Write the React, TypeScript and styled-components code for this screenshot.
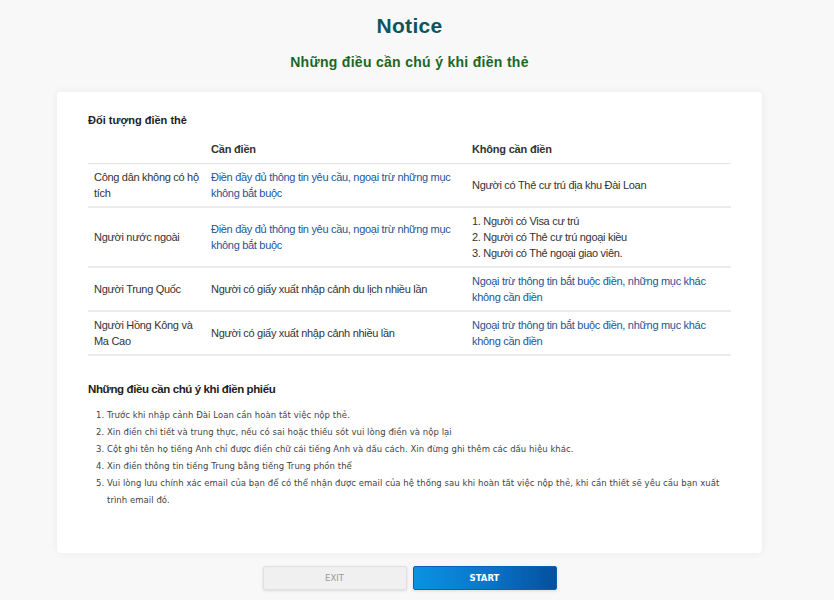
import React from "react";
import styled, { createGlobalStyle } from "styled-components";

const Global = createGlobalStyle`
  html, body { margin: 0; padding: 0; background: #f8f8f8; }
  body { font-family: "Liberation Sans", Arial, sans-serif; }
  * { box-sizing: border-box; }
`;

const Page = styled.div`
  width: 819px;
  display: flex;
  flex-direction: column;
  align-items: center;
  padding-top: 13px;
`;

const Title = styled.h1`
  margin: 0;
  font-size: 21px;
  line-height: 26px;
  font-weight: bold;
  color: #0d5360;
  letter-spacing: 0.3px;
`;

const Subtitle = styled.h2`
  margin: 14px 0 0;
  font-size: 14px;
  line-height: 18px;
  font-weight: bold;
  color: #1c6625;
  letter-spacing: 0.3px;
`;

const Card = styled.div`
  margin-top: 21px;
  width: 705px;
  background: #fff;
  border-radius: 4px;
  box-shadow: 0 0 10px rgba(0, 0, 0, 0.06);
  padding: 20px 30px 44px 31px;
`;

const SectionTitle = styled.div`
  font-size: 11px;
  line-height: 16px;
  font-weight: bold;
  color: #222;
  margin-bottom: 7px;
`;

const Table = styled.table`
  width: 643px;
  border-collapse: collapse;
  table-layout: fixed;
`;

const Th = styled.th<{ $w: number }>`
  width: ${(p) => p.$w}px;
  text-align: left;
  font-size: 11px;
  line-height: 16px;
  font-weight: bold;
  color: #333;
  letter-spacing: -0.2px;
  padding: 6px 2px 6px 6px;
  border-bottom: 1px solid #e3e3e3;
`;

const Row = styled.tr`
  border-bottom: 2px solid #ececec;
`;

const Td = styled.td<{ $blue?: boolean }>`
  font-size: 11px;
  line-height: 16px;
  letter-spacing: -0.3px;
  color: ${(p) => (p.$blue ? "#1d5597" : "#333")};
  padding: 5px 2px 5px 6px;
  vertical-align: middle;
`;

const NotesTitle = styled.div`
  margin-top: 25px;
  font-size: 11.5px;
  line-height: 16px;
  font-weight: bold;
  letter-spacing: -0.4px;
  color: #222;
`;

const NoteList = styled.ol`
  margin: 10px 0 0;
  padding-left: 19px;
  font-family: "DejaVu Sans", Verdana, sans-serif;
  font-size: 8.5px;
  line-height: 17px;
  color: #444;
  letter-spacing: 0.05px;
`;

const Buttons = styled.div`
  margin-top: 13px;
  display: flex;
  gap: 6px;
  padding-bottom: 9px;
`;

const Button = styled.button<{ $primary?: boolean }>`
  width: 144px;
  height: 24px;
  border-radius: 2px;
  font-family: "DejaVu Sans", Verdana, sans-serif;
  font-size: 8.5px;
  cursor: pointer;
  border: 1px solid ${(p) => (p.$primary ? "#0b62b0" : "#e0e0e0")};
  background: ${(p) =>
    p.$primary ? "linear-gradient(90deg, #0a92e0 0%, #0a76cc 50%, #04509e 100%)" : "#f0f0f0"};
  color: ${(p) => (p.$primary ? "#fff" : "#9a9a9a")};
  font-weight: ${(p) => (p.$primary ? "bold" : "normal")};
  box-shadow: 0 1px 3px rgba(0, 0, 0, 0.12);
`;

const rows: { who: string[]; need: string[]; needBlue: boolean; noNeed: string[]; noNeedBlue: boolean }[] = [
  {
    who: ["Công dân không có hộ tích"],
    need: ["Điền đầy đủ thông tin yêu cầu, ngoại trừ những mục không bắt buộc"],
    needBlue: true,
    noNeed: ["Người có Thẻ cư trú địa khu Đài Loan"],
    noNeedBlue: false,
  },
  {
    who: ["Người nước ngoài"],
    need: ["Điền đầy đủ thông tin yêu cầu, ngoại trừ những mục không bắt buộc"],
    needBlue: true,
    noNeed: ["1. Người có Visa cư trú", "2. Người có Thẻ cư trú ngoại kiều", "3. Người có Thẻ ngoại giao viên."],
    noNeedBlue: false,
  },
  {
    who: ["Người Trung Quốc"],
    need: ["Người có giấy xuất nhập cảnh du lịch nhiều lần"],
    needBlue: false,
    noNeed: ["Ngoại trừ thông tin bắt buộc điền, những mục khác không cần điền"],
    noNeedBlue: true,
  },
  {
    who: ["Người Hồng Kông và Ma Cao"],
    need: ["Người có giấy xuất nhập cảnh nhiều lần"],
    needBlue: false,
    noNeed: ["Ngoại trừ thông tin bắt buộc điền, những mục khác không cần điền"],
    noNeedBlue: true,
  },
];

const notes = [
  "Trước khi nhập cảnh Đài Loan cần hoàn tất việc nộp thẻ.",
  "Xin điền chi tiết và trung thực, nếu có sai hoặc thiếu sót vui lòng điền và nộp lại",
  "Cột ghi tên họ tiếng Anh chỉ được điền chữ cái tiếng Anh và dấu cách. Xin đừng ghi thêm các dấu hiệu khác.",
  "Xin điền thông tin tiếng Trung bằng tiếng Trung phồn thể",
  "Vui lòng lưu chính xác email của bạn để có thể nhận được email của hệ thống sau khi hoàn tất việc nộp thẻ, khi cần thiết sẽ yêu cầu bạn xuất trình email đó.",
];

const Lines = ({ lines }: { lines: string[] }) => (
  <>
    {lines.map((l, i) => (
      <div key={i}>{l}</div>
    ))}
  </>
);

export default function App() {
  return (
    <>
      <Global />
      <Page>
        <Title>Notice</Title>
        <Subtitle>Những điều cần chú ý khi điền thẻ</Subtitle>
        <Card>
          <SectionTitle>Đối tượng điền thẻ</SectionTitle>
          <Table>
            <thead>
              <tr>
                <Th $w={117}></Th>
                <Th $w={261}>Cần điền</Th>
                <Th $w={265}>Không cần điền</Th>
              </tr>
            </thead>
            <tbody>
              {rows.map((r, i) => (
                <Row key={i}>
                  <Td>
                    <Lines lines={r.who} />
                  </Td>
                  <Td $blue={r.needBlue}>
                    <Lines lines={r.need} />
                  </Td>
                  <Td $blue={r.noNeedBlue}>
                    <Lines lines={r.noNeed} />
                  </Td>
                </Row>
              ))}
            </tbody>
          </Table>
          <NotesTitle>Những điều cần chú ý khi điền phiếu</NotesTitle>
          <NoteList>
            {notes.map((n, i) => (
              <li key={i}>{n}</li>
            ))}
          </NoteList>
        </Card>
        <Buttons>
          <Button>EXIT</Button>
          <Button $primary>START</Button>
        </Buttons>
      </Page>
    </>
  );
}
